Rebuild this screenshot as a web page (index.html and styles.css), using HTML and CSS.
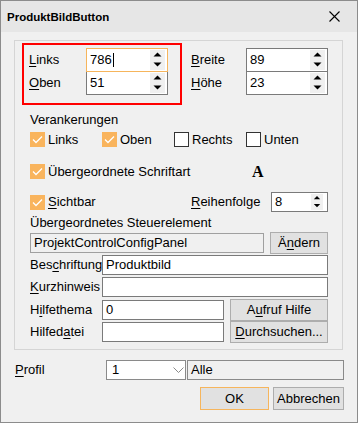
FILE: index.html
```html
<!DOCTYPE html>
<html lang="de">
<head>
<meta charset="utf-8">
<title>ProduktBildButton</title>
<link rel="stylesheet" href="styles.css">
</head>
<body>
<div class="window">
  <div class="titlebar">
    <span class="title">ProduktBildButton</span>
    <svg class="close" width="11" height="11" viewBox="0 0 11 11"><path d="M0.5 0.5L10.5 10.5M10.5 0.5L0.5 10.5" stroke="#000" stroke-width="1.1" fill="none"/></svg>
  </div>
  <div class="content">
    <div class="group">
      <div class="pos">
        <div class="highlight">
          <div class="frow">
            <span class="lbl lbl-pos"><u>L</u>inks</span>
            <div class="spin focused"><span class="val">786</span><span class="caret"></span>
              <svg class="arrows" viewBox="0 0 15 20"><rect width="15" height="20" fill="#f0f0f0"/><path d="M3.5 6.5H11.5L7.5 2.5Z M3.5 12.5H11.5L7.5 16.5Z" fill="#000"/></svg>
            </div>
          </div>
          <div class="frow second">
            <span class="lbl lbl-pos"><u>O</u>ben</span>
            <div class="spin"><span class="val">51</span>
              <svg class="arrows" viewBox="0 0 15 20"><rect width="15" height="20" fill="#f0f0f0"/><path d="M3.5 6.5H11.5L7.5 2.5Z M3.5 12.5H11.5L7.5 16.5Z" fill="#000"/></svg>
            </div>
          </div>
        </div>
        <div class="size">
          <div class="frow">
            <span class="lbl lbl-size"><u>B</u>reite</span>
            <div class="spin"><span class="val">89</span>
              <svg class="arrows" viewBox="0 0 15 20"><rect width="15" height="20" fill="#f0f0f0"/><path d="M3.5 6.5H11.5L7.5 2.5Z M3.5 12.5H11.5L7.5 16.5Z" fill="#000"/></svg>
            </div>
          </div>
          <div class="frow second">
            <span class="lbl lbl-size"><u>H</u>öhe</span>
            <div class="spin"><span class="val">23</span>
              <svg class="arrows" viewBox="0 0 15 20"><rect width="15" height="20" fill="#f0f0f0"/><path d="M3.5 6.5H11.5L7.5 2.5Z M3.5 12.5H11.5L7.5 16.5Z" fill="#000"/></svg>
            </div>
          </div>
        </div>
      </div>

      <div class="stitle anchors-title">Verankerungen</div>
      <div class="anchors">
        <div class="cb-item"><span class="cb checked"><svg viewBox="0 0 15 15"><polyline points="3,7.5 6,10.5 12,4.5" stroke="#fff" stroke-width="1.3" fill="none"/></svg></span><span>Links</span></div>
        <div class="cb-item"><span class="cb checked"><svg viewBox="0 0 15 15"><polyline points="3,7.5 6,10.5 12,4.5" stroke="#fff" stroke-width="1.3" fill="none"/></svg></span><span>Oben</span></div>
        <div class="cb-item"><span class="cb"></span><span>Rechts</span></div>
        <div class="cb-item"><span class="cb"></span><span>Unten</span></div>
      </div>

      <div class="font-row">
        <div class="cb-item wide"><span class="cb checked"><svg viewBox="0 0 15 15"><polyline points="3,7.5 6,10.5 12,4.5" stroke="#fff" stroke-width="1.3" fill="none"/></svg></span><span>Übergeordnete Schriftart</span></div>
        <span class="font-a">A</span>
      </div>

      <div class="visible-row">
        <div class="cb-item visible"><span class="cb checked"><svg viewBox="0 0 15 15"><polyline points="3,7.5 6,10.5 12,4.5" stroke="#fff" stroke-width="1.3" fill="none"/></svg></span><span><u>S</u>ichtbar</span></div>
        <span class="lbl lbl-order"><u>R</u>eihenfolge</span>
        <div class="spin small"><span class="val">8</span>
          <svg class="arrows" viewBox="0 0 15 20"><rect width="15" height="20" fill="#f0f0f0"/><path d="M3.5 6.5H11.5L7.5 2.5Z M3.5 12.5H11.5L7.5 16.5Z" fill="#000"/></svg>
        </div>
      </div>

      <div class="stitle parent-title">Übergeordnetes Steuerelement</div>
      <div class="parent-row">
        <div class="field readonly parent-field">ProjektControlConfigPanel</div>
        <div class="btn change">Ä<u>n</u>dern</div>
      </div>

      <div class="form">
        <div class="form-row">
          <span class="lbl lbl-form">Bes<u>c</u>hriftung</span>
          <div class="field full">Produktbild</div>
        </div>
        <div class="form-row">
          <span class="lbl lbl-form"><u>K</u>urzhinweis</span>
          <div class="field full"></div>
        </div>
        <div class="form-row gap1">
          <span class="lbl lbl-form">H<u>i</u>lfethema</span>
          <div class="field half">0</div>
          <div class="btn side">A<u>u</u>fruf Hilfe</div>
        </div>
        <div class="form-row">
          <span class="lbl lbl-form">Hilfed<u>a</u>tei</span>
          <div class="field half"></div>
          <div class="btn side"><u>D</u>urchsuchen...</div>
        </div>
      </div>
    </div>

    <div class="profile-row">
      <span class="lbl lbl-profile"><u>P</u>rofil</span>
      <div class="combo"><span>1</span>
        <svg class="chev" width="11" height="6" viewBox="0 0 11 6"><polyline points="0.5,0.5 5.5,5.5 10.5,0.5" stroke="#8a8a8a" stroke-width="1" fill="none"/></svg>
      </div>
      <div class="field readonly alle">Alle</div>
    </div>

    <div class="buttons">
      <div class="btn ok">OK</div>
      <div class="btn cancel">Abbrechen</div>
    </div>
  </div>
</div>
</body>
</html>
```

FILE: styles.css
```css
* { box-sizing: border-box; }

html, body {
  margin: 0;
  padding: 0;
  background: #f0f0f0;
}

body {
  font-family: "Liberation Sans", Arial, sans-serif;
  font-size: 13px;
  line-height: 16px;
  color: #000;
}

u {
  text-decoration-thickness: 1px;
  text-underline-offset: 2px;
}

.window {
  width: 358px;
  height: 423px;
  border: 1px solid #8c8c8c;
  background: #f0f0f0;
  display: flex;
  flex-direction: column;
}

.titlebar {
  height: 31px;
  flex: none;
  background: #e6e6e6;
  display: flex;
  align-items: center;
  justify-content: space-between;
  padding-left: 6px;
}

.title {
  font-size: 11.5px;
  font-weight: bold;
  color: #000;
}

.close {
  margin-right: 17px;
  display: block;
}

.content {
  padding: 8px 13px 0 13px;
}

.group {
  width: 329px;
  height: 310px;
  border: 1px solid #d5d5d5;
  padding-left: 15px;
}

/* position / size */
.pos {
  display: flex;
  align-items: flex-start;
  margin-top: 2px;
  margin-left: -8px;
}

.highlight {
  width: 160px;
  height: 62px;
  border: 2px solid #ff0000;
  padding: 3px 0 0 5px;
}

.size {
  margin-left: 9px;
  margin-top: 5px;
}

.frow {
  display: flex;
  align-items: center;
  height: 24px;
}

.frow.second {
  margin-top: -1px;
  height: 24px;
}

.lbl {
  white-space: nowrap;
  flex: none;
}

.lbl-pos { width: 57px; }
.lbl-size { width: 55px; }

.spin {
  width: 82px;
  height: 24px;
  border: 1px solid #7a7a7a;
  background: #fff;
  display: flex;
  align-items: center;
  padding-left: 3px;
  flex: none;
}

.spin.focused {
  border-color: #f6b55c;
  position: relative;
  z-index: 1;
}

.caret {
  width: 1px;
  height: 14px;
  background: #000;
  margin-left: 1px;
}

.arrows {
  width: 15px;
  height: 20px;
  margin-left: auto;
  margin-right: 2px;
  display: block;
}

.spin.small {
  width: 57px;
  height: 20px;
}

.spin.small .arrows {
  height: 16px;
  width: 14px;
  margin-right: 3px;
}

/* section titles */
.stitle {
  height: 16px;
  white-space: nowrap;
}

.anchors-title { margin-top: 7px; }

.anchors {
  display: flex;
  margin-top: 4px;
  height: 15px;
}

.cb-item {
  display: flex;
  align-items: center;
  gap: 3px;
  width: 72px;
  height: 15px;
  white-space: nowrap;
  flex: none;
}

.cb {
  width: 15px;
  height: 15px;
  border: 1px solid #333;
  background: #fff;
  display: block;
  flex: none;
}

.cb.checked {
  border: none;
  background: #f9b45d;
}

.cb svg {
  width: 15px;
  height: 15px;
  display: block;
}

.font-row {
  display: flex;
  align-items: center;
  margin-top: 17px;
  height: 15px;
}

.cb-item.wide { width: 222px; }

.font-a {
  font-family: "Liberation Serif", "Times New Roman", serif;
  font-weight: bold;
  font-size: 16px;
  line-height: 15px;
}

.visible-row {
  display: flex;
  align-items: center;
  margin-top: 13px;
  height: 20px;
}

.cb-item.visible { width: 161px; }

.lbl-order { width: 80px; }

.parent-title { margin-top: 3px; }

.parent-row {
  display: flex;
  align-items: center;
  margin-top: 1px;
  height: 22px;
}

.field {
  height: 20px;
  border: 1px solid #7a7a7a;
  background: #fff;
  padding-left: 3px;
  display: flex;
  align-items: center;
  white-space: nowrap;
  flex: none;
}

.field.readonly {
  background: #f0f0f0;
  border-color: #a0a0a0;
}

.parent-field { width: 234px; }

.btn {
  height: 22px;
  background: #e1e1e1;
  border: 1px solid #adadad;
  display: flex;
  align-items: center;
  justify-content: center;
  white-space: nowrap;
  flex: none;
}

.btn.change {
  width: 58px;
  margin-left: 6px;
}

.form-row {
  display: flex;
  align-items: center;
  height: 22px;
}

.form-row.gap1 { margin-top: 1px; }

.lbl-form {
  width: 72px;
  overflow: visible;
}

.field.full { width: 226px; }
.field.half { width: 122px; }

.btn.side {
  width: 98px;
  margin-left: 6px;
}

/* profile */
.profile-row {
  display: flex;
  align-items: center;
  margin-top: 10px;
  height: 20px;
}

.lbl-profile {
  width: 91px;
  margin-left: 1px;
}

.combo {
  width: 80px;
  height: 20px;
  border: 1px solid #8a8a8a;
  background: #fff;
  display: flex;
  align-items: center;
  padding-left: 5px;
  flex: none;
}

.chev {
  margin-left: auto;
  margin-right: 1px;
  display: block;
}

.field.alle {
  width: 157px;
  margin-left: 1px;
  border-color: #8a8a8a;
}

.buttons {
  display: flex;
  justify-content: flex-end;
  gap: 4px;
  margin-top: 7px;
}

.btn.ok {
  width: 69px;
  height: 23px;
  border-color: #f6b55c;
}

.btn.cancel {
  width: 71px;
  height: 23px;
}
```
